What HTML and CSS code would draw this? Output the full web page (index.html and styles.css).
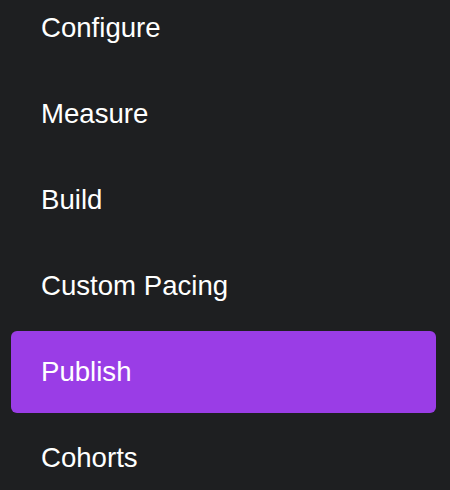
FILE: index.html
```html
<!DOCTYPE html>
<html>
<head>
<meta charset="utf-8">
<link rel="stylesheet" href="styles.css">
</head>
<body>
<nav class="menu">
  <div class="item">Configure</div>
  <div class="item">Measure</div>
  <div class="item">Build</div>
  <div class="item">Custom Pacing</div>
  <div class="item active">Publish</div>
  <div class="item">Cohorts</div>
</nav>
</body>
</html>
```
FILE: styles.css
```css
html, body {
  margin: 0;
  padding: 0;
  background: #1e1f21;
  overflow: hidden;
}
.menu {
  display: flex;
  flex-direction: column;
  gap: 4px;
  margin-top: -13px;
  padding: 0 14px 0 11px;
}
.item {
  height: 82px;
  display: flex;
  align-items: center;
  padding-left: 30px;
  border-radius: 6px;
  color: #ffffff;
  font-family: "Liberation Sans", Arial, sans-serif;
  font-size: 27.6px;
}
.item.active {
  background: #9a3de6;
}
```
